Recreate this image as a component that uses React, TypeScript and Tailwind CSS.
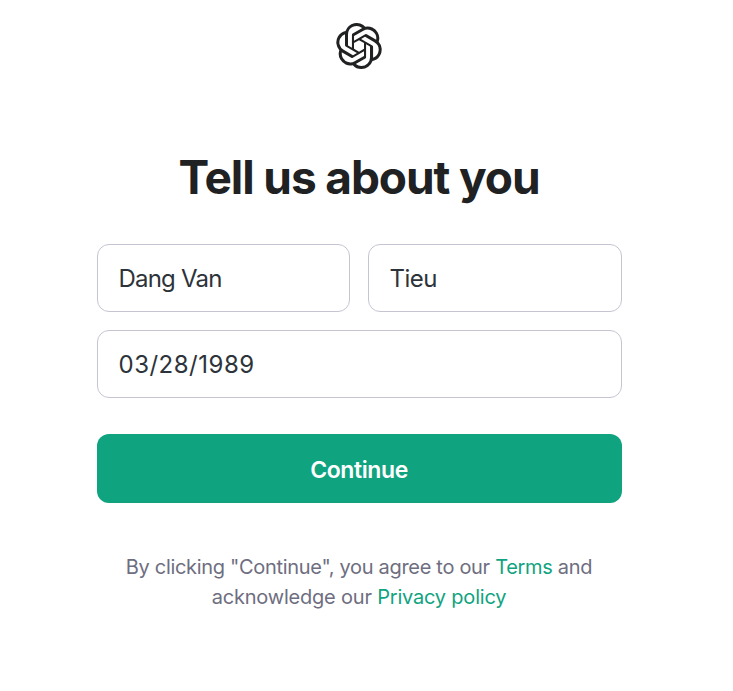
import { SiOpenai } from 'react-icons/si'

export default function App() {
  return (
    <div className="flex h-[691px] flex-col bg-white pr-[15px] font-['Inter',sans-serif] text-[#202123]">
      <header className="flex justify-center pt-[23px]">
        <SiOpenai className="size-[46px]" />
      </header>
      <main className="mx-auto flex w-[525px] flex-col pt-[78px]">
        <h1 className="text-center text-[46px] leading-[60px] font-bold whitespace-nowrap tracking-[-1.1px]">Tell us about you</h1>
        <form className="mt-[37px] flex flex-col text-[#2d333a]" onSubmit={(e) => e.preventDefault()}>
          <div className="flex gap-[18px]">
            <input aria-label="First name" defaultValue="Dang Van" className="h-[68px] w-[253px] rounded-xl border border-[#c5c5d2] px-[21px] text-2xl tracking-[-0.8px]" />
            <input aria-label="Last name" defaultValue="Tieu" className="h-[68px] w-[254px] rounded-xl border border-[#c5c5d2] px-[21px] text-2xl tracking-[-0.5px]" />
          </div>
          <input aria-label="Birthday" defaultValue="03/28/1989" className="mt-[18px] h-[68px] rounded-xl border border-[#c5c5d2] px-[21px] text-2xl tracking-[0.5px]" />
          <button className="mt-9 h-[69px] rounded-xl bg-[#10a37f] pt-[3px] text-[23px] font-semibold tracking-[-0.4px] text-white">Continue</button>
        </form>
        <p className="mt-[49px] text-center text-xl leading-[30px] text-[#6e6e80]">
          <span className="tracking-[-0.31px]">
            By clicking "Continue", you agree to our <a href="#" className="text-[#10a37f]">Terms</a> and
          </span>
          <br />
          <span className="tracking-[-0.2px]">
            acknowledge our <a href="#" className="text-[#10a37f]">Privacy policy</a>
          </span>
        </p>
      </main>
    </div>
  )
}
